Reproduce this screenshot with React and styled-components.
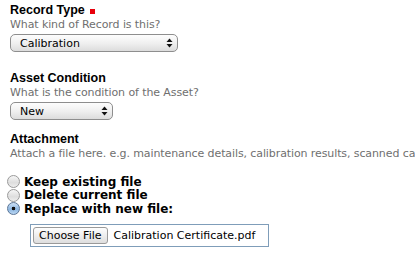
import styled, { createGlobalStyle } from "styled-components";

const GlobalStyle = createGlobalStyle`
    html, body {
        margin: 0;
        padding: 0;
        background: #fff;
    }
    body {
        font-family: "DejaVu Sans", Verdana, sans-serif;
        overflow: hidden;
    }
`

const Page = () => {
    const options = [
        { label: "Keep existing file", checked: false },
        { label: "Delete current file", checked: false },
        { label: "Replace with new file:", checked: true },
    ]

    return (
        <StyledForm>
            <GlobalStyle />
            <StyledField spacing={18}>
                <StyledLabel>Record Type <StyledRequired /></StyledLabel>
                <StyledHelp>What kind of Record is this?</StyledHelp>
                <StyledSelect width={168}>
                    <span>Calibration</span>
                    <StyledArrows><Arrows /></StyledArrows>
                </StyledSelect>
            </StyledField>

            <StyledField spacing={11}>
                <StyledLabel>Asset Condition</StyledLabel>
                <StyledHelp>What is the condition of the Asset?</StyledHelp>
                <StyledSelect width={103}>
                    <span>New</span>
                    <StyledArrows><Arrows /></StyledArrows>
                </StyledSelect>
            </StyledField>

            <StyledField spacing={0}>
                <StyledLabel>Attachment</StyledLabel>
                <StyledHelp>Attach a file here. e.g. maintenance details, calibration results, scanned calibration certificates</StyledHelp>
                <StyledRadioList>
                    {options.map(option => (
                        <StyledRadioRow key={option.label}>
                            <StyledRadio checked={option.checked} />
                            {option.label}
                        </StyledRadioRow>
                    ))}
                </StyledRadioList>
                <StyledFileBox>
                    <StyledFileButton>Choose File</StyledFileButton>
                    <StyledFileName>Calibration Certificate.pdf</StyledFileName>
                </StyledFileBox>
            </StyledField>
        </StyledForm>
    )
}

// up / down arrows of the aqua select
const Arrows = () => (
    <svg width="7" height="10" viewBox="0 0 7 10">
        <path d="M3.5 0.5 L6.5 4 L0.5 4 Z" fill="#111" />
        <path d="M3.5 9.5 L6.5 6 L0.5 6 Z" fill="#111" />
    </svg>
)

export default Page;

// Styled-components

const StyledForm = styled.div`
    padding: 2px 0 0 10px;
    width: 405px;
    overflow: hidden;
`

const StyledField = styled.div`
    margin-bottom: ${props => props.spacing}px;
`

const StyledLabel = styled.div`
    font-family: "Liberation Sans", Arial, sans-serif;
    font-size: 12.5px;
    font-weight: bold;
    line-height: 16px;
    color: #000;
    display: flex;
    align-items: center;
    gap: 5px;
`

const StyledRequired = styled.span`
    display: inline-block;
    width: 5px;
    height: 5px;
    margin-top: 3px;
    background: #e8000b;
`

const StyledHelp = styled.div`
    font-size: 11px;
    line-height: 14px;
    letter-spacing: -0.1px;
    color: #6f6f6f;
    white-space: nowrap;
`

const StyledSelect = styled.div`
    box-sizing: border-box;
    width: ${props => props.width}px;
    height: 18px;
    margin-top: 2px;
    border: 1px solid #8e8e8e;
    border-radius: 5px;
    background: linear-gradient(#fdfdfd, #f0f0f0 50%, #dcdcdc);
    display: flex;
    align-items: center;
    justify-content: space-between;
    font-size: 11px;
    color: #000;
    padding-left: 9px;
`

const StyledArrows = styled.div`
    width: 16px;
    height: 100%;
    display: flex;
    align-items: center;
    justify-content: center;
`

const StyledRadioList = styled.div`
    margin: 14px 0 0 -3px;
`

const StyledRadioRow = styled.div`
    display: flex;
    align-items: center;
    gap: 4px;
    height: 13.5px;
    font-size: 12px;
    font-weight: bold;
    color: #000;
`

const StyledRadio = styled.span`
    box-sizing: border-box;
    width: 13px;
    height: 13px;
    border-radius: 50%;
    border: 1px solid ${props => props.checked ? "#5a7596" : "#9a9a9a"};
    background: ${props => props.checked
        ? "radial-gradient(circle, #111 0 1.5px, transparent 2.1px), linear-gradient(#cfe2f6, #8db6e0 55%, #b9d6f3)"
        : "linear-gradient(#f6f6f6, #dedede 60%, #eeeeee)"};
`

const StyledFileBox = styled.div`
    box-sizing: border-box;
    width: 239px;
    height: 23px;
    margin: 8px 0 0 20px;
    border: 1px solid #7f9db9;
    display: flex;
    align-items: center;
    padding-left: 2px;
    gap: 6px;
`

const StyledFileButton = styled.div`
    box-sizing: border-box;
    height: 17px;
    padding: 0 5px;
    border: 1px solid #9a9a9a;
    border-radius: 3px;
    background: linear-gradient(#fefefe, #ececec 55%, #dedede);
    font-size: 11px;
    line-height: 15px;
    color: #000;
`

const StyledFileName = styled.span`
    font-size: 11px;
    color: #000;
`
